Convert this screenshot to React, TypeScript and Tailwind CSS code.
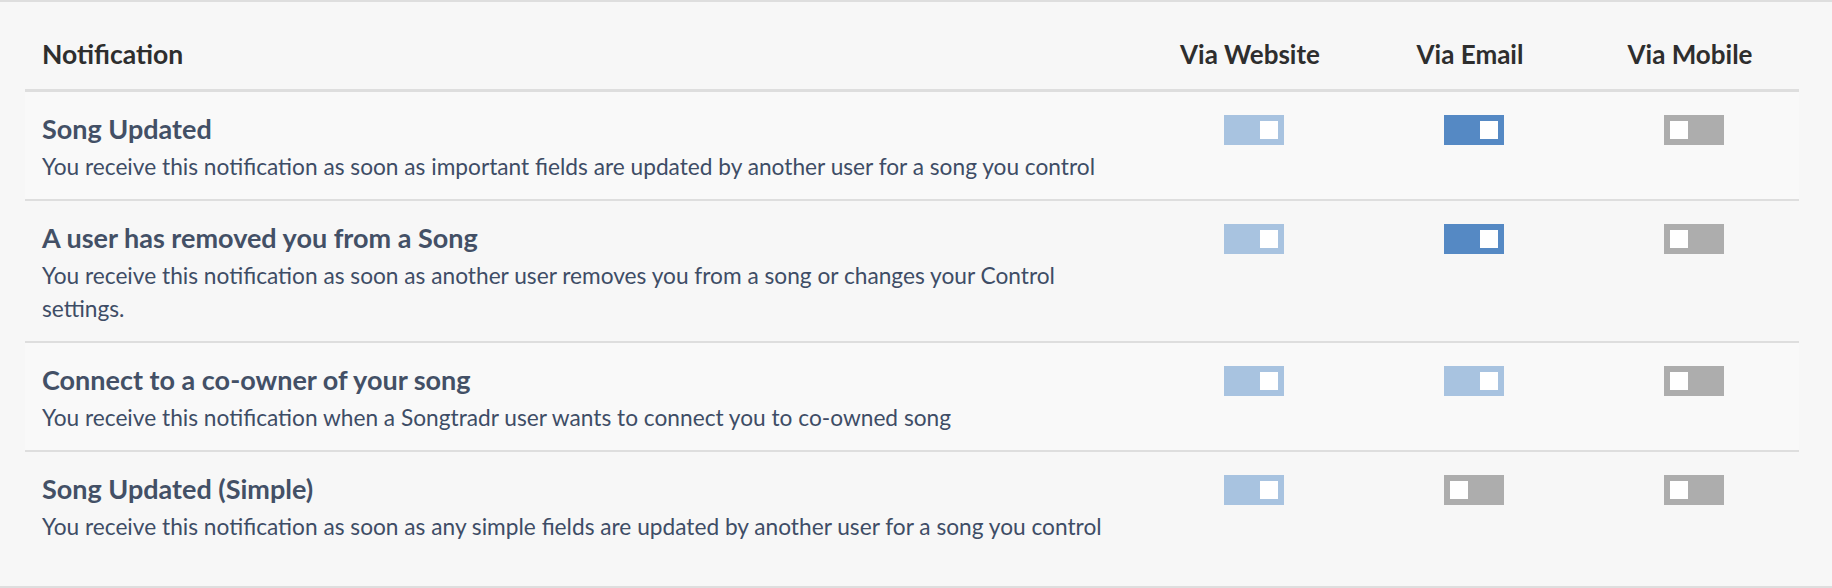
import React from 'react';

type Level = 'soft' | 'on' | 'off';

const rows: { title: string; desc: string; web: Level; email: Level; mobile: Level }[] = [
  {
    title: 'Song Updated',
    desc: 'You receive this notification as soon as important fields are updated by another user for a song you control',
    web: 'soft',
    email: 'on',
    mobile: 'off',
  },
  {
    title: 'A user has removed you from a Song',
    desc: 'You receive this notification as soon as another user removes you from a song or changes your Control settings.',
    web: 'soft',
    email: 'on',
    mobile: 'off',
  },
  {
    title: 'Connect to a co-owner of your song',
    desc: 'You receive this notification when a Songtradr user wants to connect you to co-owned song',
    web: 'soft',
    email: 'soft',
    mobile: 'off',
  },
  {
    title: 'Song Updated (Simple)',
    desc: 'You receive this notification as soon as any simple fields are updated by another user for a song you control',
    web: 'soft',
    email: 'off',
    mobile: 'off',
  },
];

function Toggle({ level }: { level: Level }) {
  const bg = level === 'on' ? 'bg-[#5589c4]' : level === 'soft' ? 'bg-[#a8c3e0]' : 'bg-[#adadad]';
  const side = level === 'off' ? 'justify-start' : 'justify-end';
  return (
    <div className={`flex h-[30px] w-[60px] items-center px-[6px] ${bg} ${side}`}>
      <div className="size-[18px] bg-white"></div>
    </div>
  );
}

export default function App() {
  return (
    <main
      className="h-[588px] w-full border-y-2 border-[#dedede] bg-[#f7f7f7] px-[25px] pb-[24px]"
      style={{ fontFamily: 'Lato, "Open Sans", sans-serif' }}
    >
      <div className="w-[1774px]">
        {/* header */}
        <div className="grid grid-cols-[1114px_220px_220px_220px] border-b-[3px] border-[#dedede] pt-[36px] pb-[19px] text-[26px] font-bold leading-[32px] text-[#2e2e2e]">
          <div className="pl-[17px] text-[26.5px]">Notification</div>
          <div className="pl-[2px] text-center">Via Website</div>
          <div className="pl-[2px] text-center">Via Email</div>
          <div className="pl-[2px] text-center">Via Mobile</div>
        </div>

        {rows.map((r, i) => (
          <div
            key={r.title}
            className={`grid grid-cols-[1114px_220px_220px_220px] ${i < rows.length - 1 ? 'border-b-2 border-[#dedede]' : ''} ${
              i % 2 === 0 ? 'bg-[#f9f9f9]' : 'bg-[#f7f7f7]'
            }`}
          >
            <div className="pl-[17px] pt-[21px] pb-[16px]">
              <h3 className="text-[27px] font-bold leading-[32px] text-[#435066]">{r.title}</h3>
              <p className="mt-[5px] max-w-[1090px] text-[22.7px] leading-[33px] text-[#3e4d66]">{r.desc}</p>
            </div>
            <div className="flex justify-center pl-[10px] pt-[23px]">
              <Toggle level={r.web} />
            </div>
            <div className="flex justify-center pl-[10px] pt-[23px]">
              <Toggle level={r.email} />
            </div>
            <div className="flex justify-center pl-[10px] pt-[23px]">
              <Toggle level={r.mobile} />
            </div>
          </div>
        ))}
      </div>
    </main>
  );
}
